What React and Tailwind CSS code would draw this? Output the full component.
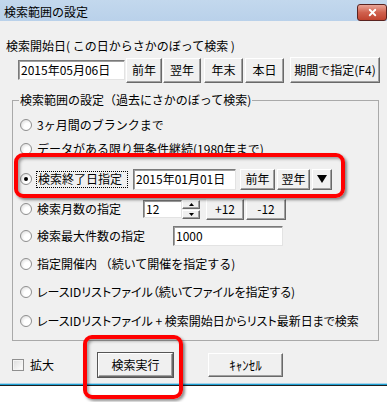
import { X } from "lucide-react";

const Btn = ({ className = "", children }) => (
  <div
    className={`flex items-center justify-center whitespace-nowrap border border-t-white border-l-white border-r-[#696969] border-b-[#696969] bg-[#f0f0f0] shadow-[inset_-1px_-1px_0_#a0a0a0] ${className}`}
  >
    {children}
  </div>
);

const Field = ({ className = "", children }) => (
  <div
    className={`flex items-center whitespace-nowrap border border-t-[#7a7a7a] border-l-[#7a7a7a] border-r-[#e3e3e3] border-b-[#e3e3e3] bg-white pl-[2px] shadow-[inset_1px_1px_0_#a0a0a0] ${className}`}
  >
    {children}
  </div>
);

const Radio = ({ checked }) => (
  <span className="flex h-[12px] w-[12px] shrink-0 items-center justify-center rounded-full border border-[#8f8f8f] bg-[radial-gradient(circle_at_65%_65%,#ffffff_35%,#d2d2d2_100%)]">
    {checked && <span className="h-[4px] w-[4px] rounded-full bg-black" />}
  </span>
);

const Row = ({ className = "", children }) => (
  <div className={`flex h-[22px] items-center whitespace-nowrap pl-[7px] ${className}`}>{children}</div>
);

const App = () => {
  return (
    <div className="relative h-[402px] w-[387px] overflow-hidden bg-white font-['Noto_Sans_CJK_JP',sans-serif] text-[12px] leading-[12px] text-black">
      {/* title bar */}
      <div className="flex h-[21px] items-start bg-gradient-to-b from-[#c3d8ed] to-[#b9d1ea] pl-[4px]">
        <span className="mt-[6px]">検索範囲の設定</span>
        <div className="ml-auto mt-[4px] flex h-[17px] w-[30px] items-center justify-center rounded-[3px] border border-[#5a2320] bg-gradient-to-b from-[#e9a597] via-[#d0614e] to-[#c0432f]">
          <X className="h-[11px] w-[11px] text-white" strokeWidth={4} />
        </div>
      </div>

      {/* body */}
      <div className="flex h-[362px] flex-col bg-[#f0f0f0]">
        <div className="mt-[19px] pl-[6px]">検索開始日( この日からさかのぼって検索 )</div>
        <div className="mt-[5px] flex h-[26px] items-center pl-[18px]">
          <Field className="h-[20px] w-[107px]">2015年05月06日</Field>
          <Btn className="ml-[1px] h-[25px] w-[36px]">前年</Btn>
          <Btn className="ml-[1px] h-[25px] w-[38px]">翌年</Btn>
          <Btn className="ml-[3px] h-[25px] w-[39px]">年末</Btn>
          <Btn className="ml-[2px] h-[25px] w-[39px]">本日</Btn>
          <Btn className="ml-[6px] h-[26px] w-[90px]">期間で指定(F4)</Btn>
        </div>

        <fieldset className="ml-[12px] mt-[11px] w-[367px] border border-[#a9a9a9] pb-[8px]">
          <legend className="ml-[6px] px-[1px] leading-[12px]">検索範囲の設定（過去にさかのぼって検索)</legend>
          <Row className="mt-[8px]">
            <Radio />
            <span className="ml-[5px]">3ヶ月間のブランクまで</span>
          </Row>
          <Row className="mt-[2px]">
            <Radio />
            <span className="ml-[5px]">データがある限り無条件継続(1980年まで)</span>
          </Row>
          <Row className="mt-[8px]">
            <Radio checked />
            <span className="ml-[4px] flex h-[17px] w-[92px] items-center border border-dotted border-black pl-[1px]">検索終了日指定</span>
            <Field className="ml-[5px] h-[21px] w-[103px]">2015年01月01日</Field>
            <Btn className="ml-[4px] h-[21px] w-[35px]">前年</Btn>
            <Btn className="ml-[2px] h-[21px] w-[33px]">翌年</Btn>
            <Btn className="ml-[2px] h-[21px] w-[20px]">
              <svg width="10" height="8" viewBox="0 0 10 8">
                <polygon points="0,0 10,0 5,8" fill="#000" />
              </svg>
            </Btn>
          </Row>
          <Row className="mt-[8px]">
            <Radio />
            <span className="ml-[5px] w-[106px]">検索月数の指定</span>
            <Field className="h-[18px] w-[39px]">12</Field>
            <div className="flex h-[19px] w-[18px] flex-col">
              <Btn className="h-[9px] w-[18px]">
                <svg width="5" height="3" viewBox="0 0 5 3">
                  <polygon points="0,3 5,3 2.5,0" fill="#000" />
                </svg>
              </Btn>
              <Btn className="mt-[1px] h-[9px] w-[18px]">
                <svg width="5" height="3" viewBox="0 0 5 3">
                  <polygon points="0,0 5,0 2.5,3" fill="#000" />
                </svg>
              </Btn>
            </div>
            <Btn className="ml-[6px] h-[21px] w-[38px]">+12</Btn>
            <Btn className="ml-[2px] h-[21px] w-[40px]">-12</Btn>
          </Row>
          <Row className="mt-[5px]">
            <Radio />
            <span className="ml-[5px] w-[136px]">検索最大件数の指定</span>
            <Field className="h-[20px] w-[110px]">1000</Field>
          </Row>
          <Row className="mt-[6px]">
            <Radio />
            <span className="ml-[5px]">指定開催内 （続いて開催を指定する)</span>
          </Row>
          <Row className="mt-[6px]">
            <Radio />
            <span className="ml-[5px] [font-feature-settings:'palt']">レースIDリストファイル（続いてファイルを指定する)</span>
          </Row>
          <Row className="mt-[7px]">
            <Radio />
            <span className="ml-[5px] [font-feature-settings:'palt']">レースIDリストファイル + 検索開始日からリスト最新日まで検索</span>
          </Row>
        </fieldset>

        <div className="mt-[12px] flex h-[24px] items-center pl-[12px]">
          <div className="flex w-[86px] items-center">
            <span className="h-[12px] w-[12px] border border-[#8f8f8f] bg-gradient-to-br from-[#dcdcdc] to-white shadow-[inset_0_0_0_1px_#f4f4f4]" />
            <span className="ml-[6px]">拡大</span>
          </div>
          <Btn className="h-[24px] w-[75px] border-r-[#333] border-b-[#333] outline outline-1 outline-[#555]">検索実行</Btn>
          <Btn className="ml-[35px] h-[24px] w-[75px] text-[13px]">ｷｬﾝｾﾙ</Btn>
        </div>
      </div>
      <div className="h-[1px] bg-[#a9d3ea]" />
      <div className="h-[1px] bg-[#1ea1d4]" />
      <div className="h-[1px] bg-[#202020]" />

      {/* red highlight marks */}
      <div className="absolute left-[14px] top-[153px] h-[45px] w-[331px] rounded-[9px] border-[4px] border-[#ff0000] shadow-[2px_2px_3px_rgba(0,0,0,0.45),inset_2px_2px_3px_rgba(0,0,0,0.35)]" />
      <div className="absolute left-[83px] top-[335px] h-[64px] w-[100px] rounded-[9px] border-[4px] border-[#ff0000] shadow-[2px_2px_3px_rgba(0,0,0,0.45),inset_2px_2px_3px_rgba(0,0,0,0.35)]" />
    </div>
  );
};

export default App;
